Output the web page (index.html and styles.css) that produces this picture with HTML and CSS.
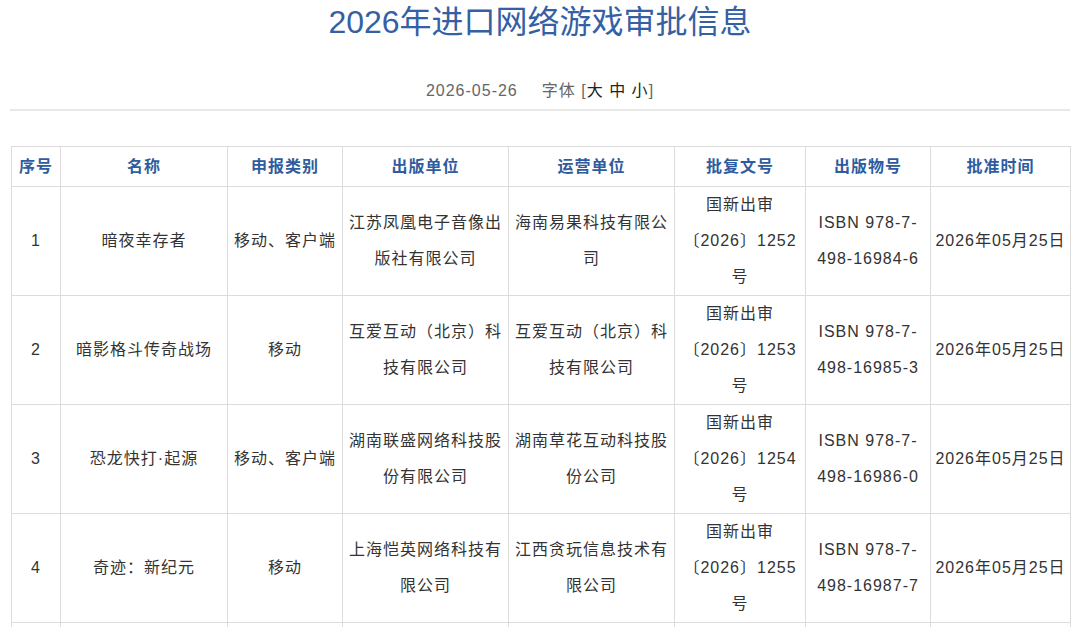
FILE: index.html
```html
<!DOCTYPE html>
<html lang="zh-CN">
<head>
<meta charset="utf-8">
<title>2026年进口网络游戏审批信息</title>
<link rel="stylesheet" href="styles.css">
</head>
<body>
<div class="page">
  <h1 class="title">2026年进口网络游戏审批信息</h1>
  <div class="meta">
    <span class="date">2026-05-26</span>
    <span class="fontsize">字体 [<span class="fs">大</span> <span class="fs">中</span> <span class="fs">小</span>]</span>
  </div>
  <div class="rule"></div>
  <table class="list">
    <colgroup>
      <col class="c1"><col class="c2"><col class="c3"><col class="c4"><col class="c5"><col class="c6"><col class="c7"><col class="c8">
    </colgroup>
    <thead>
      <tr><th>序号</th><th>名称</th><th>申报类别</th><th>出版单位</th><th>运营单位</th><th>批复文号</th><th>出版物号</th><th>批准时间</th></tr>
    </thead>
    <tbody>
      <tr><td>1</td><td>暗夜幸存者</td><td>移动、客户端</td><td>江苏凤凰电子音像出版社有限公司</td><td>海南易果科技有限公司</td><td>国新出审〔2026〕1252号</td><td>ISBN 978-7-<wbr>498-16984-6</td><td>2026年05月25日</td></tr>
      <tr><td>2</td><td>暗影格斗传奇战场</td><td>移动</td><td>互爱互动（北京）科技有限公司</td><td>互爱互动（北京）科技有限公司</td><td>国新出审〔2026〕1253号</td><td>ISBN 978-7-<wbr>498-16985-3</td><td>2026年05月25日</td></tr>
      <tr><td>3</td><td>恐龙快打·起源</td><td>移动、客户端</td><td>湖南联盛网络科技股份有限公司</td><td>湖南草花互动科技股份公司</td><td>国新出审〔2026〕1254号</td><td>ISBN 978-7-<wbr>498-16986-0</td><td>2026年05月25日</td></tr>
      <tr><td>4</td><td>奇迹：新纪元</td><td>移动</td><td>上海恺英网络科技有限公司</td><td>江西贪玩信息技术有限公司</td><td>国新出审〔2026〕1255号</td><td>ISBN 978-7-<wbr>498-16987-7</td><td>2026年05月25日</td></tr>
      <tr class="more"><td></td><td></td><td></td><td></td><td></td><td></td><td></td><td></td></tr>
    </tbody>
  </table>
</div>
</body>
</html>
```
FILE: styles.css
```css
html {
  overflow: hidden;
}
body {
  margin: 0;
  background: #ffffff;
  font-family: "Liberation Sans", "Noto Sans CJK SC", sans-serif;
  color: #333333;
}
.page {
  padding: 0 10px;
}
.title {
  margin: 0;
  padding-top: 0;
  font-size: 32px;
  line-height: 44px;
  font-weight: normal;
  text-align: center;
  color: #3560a4;
}
.meta {
  margin-top: 35px;
  text-align: center;
  font-size: 16px;
  line-height: 24px;
  color: #666666;
  letter-spacing: 1px;
  display: flex;
  justify-content: center;
  gap: 24px;
}
.fs {
  color: #222222;
}
.rule {
  margin-top: 6px;
  height: 2px;
  background: #e8e8e8;
}
.list {
  margin: 35px 0 0 1px;
  width: 1059px;
  border-collapse: collapse;
  table-layout: fixed;
  font-size: 16px;
  letter-spacing: 1px;
}
.c1 { width: 49px; }
.c2 { width: 167px; }
.c3 { width: 115px; }
.c4 { width: 166px; }
.c5 { width: 166px; }
.c6 { width: 131px; }
.c7 { width: 125px; }
.c8 { width: 140px; }
.list th,
.list td {
  border: 1px solid #dcdcdc;
  text-align: center;
  vertical-align: middle;
  padding: 0 3px;
}
.list th {
  height: 39px;
  line-height: 24px;
  font-weight: bold;
  color: #2f5c9e;
}
.list td {
  height: 108px;
  line-height: 36px;
  color: #333333;
}
```
